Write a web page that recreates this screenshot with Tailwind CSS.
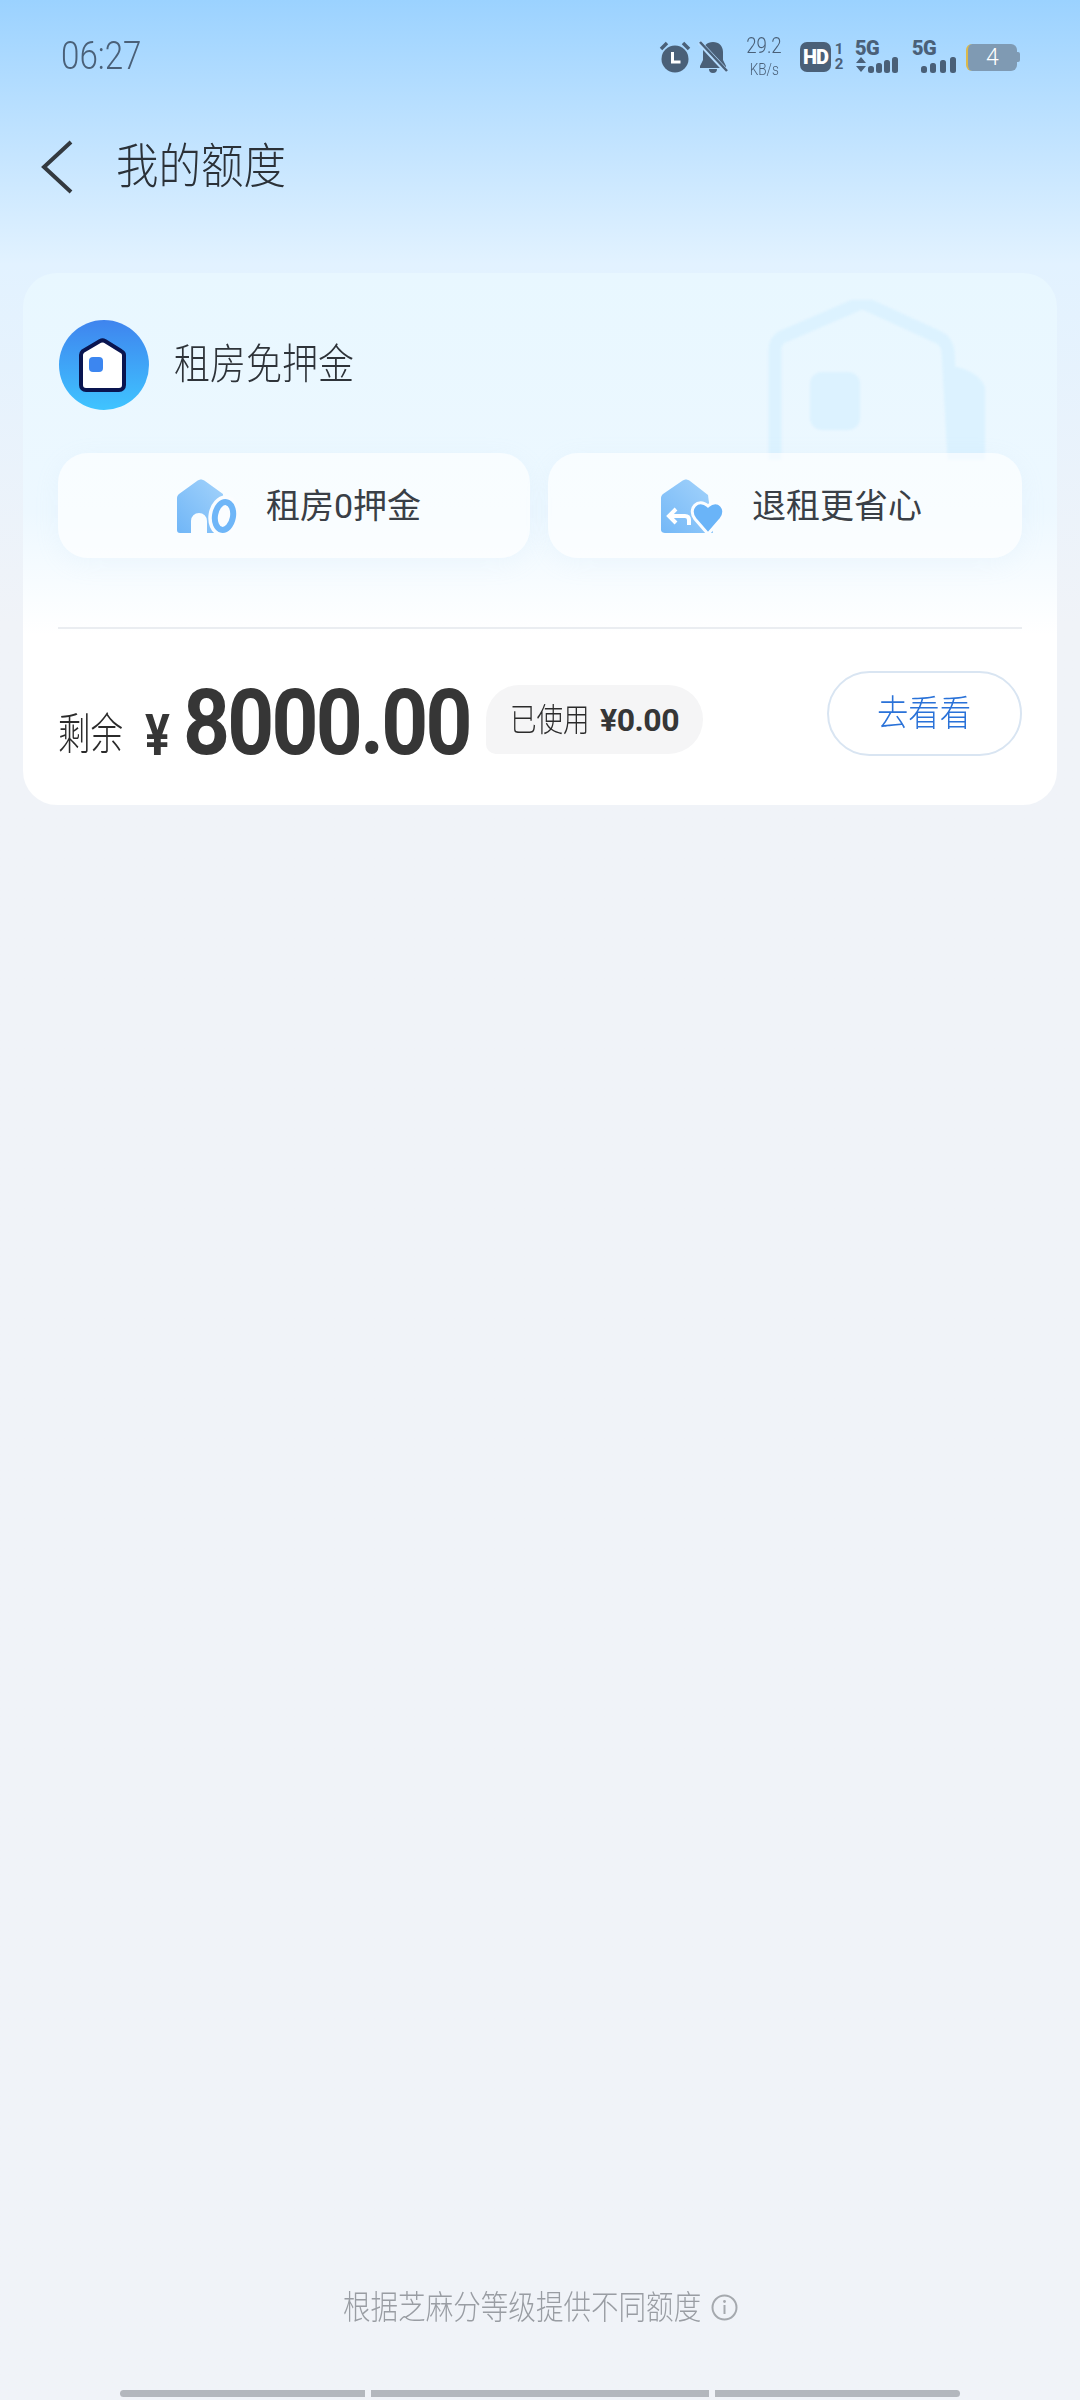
<!DOCTYPE html>
<html lang="zh">
  <head>
    <meta charset="UTF-8" />
    <meta name="viewport" content="width=device-width, initial-scale=1.0" />
    <title>我的额度</title>
    <script src="https://cdn.jsdelivr.net/npm/@tailwindcss/browser@4"></script>
  </head>
  <body class="bg-[#f0f3f8] font-['Roboto','Noto_Sans_CJK_SC',sans-serif]">
    <div class="h-[2400px] w-[1080px] flex flex-col overflow-hidden bg-gradient-to-b from-[#9bd2ff] via-[#e2f2ff] via-[11%] to-[#f0f3f8] to-[26%]">
      <!-- status bar -->
      <div class="h-[114px] pl-[61px] pr-[60px] flex items-center justify-between text-[#4a6078]">
        <span class="w-[80px] text-[39px] font-light leading-none origin-left scale-x-[.85] whitespace-nowrap -mt-[1px]">06:27</span>
        <div class="flex items-center">
          <svg class="w-[32px] h-[32px]" viewBox="0 0 32 32">
            <circle cx="16" cy="18" r="13.5" fill="#4a6078" />
            <path d="M2 8 8 2M30 8l-6-6" stroke="#4a6078" stroke-width="3.5" />
            <path d="M13.5 11v10h8" stroke="#fff" stroke-width="3" fill="none" />
          </svg>
          <svg class="w-[30px] h-[32px] ml-[7px]" viewBox="0 0 30 32">
            <path d="M15 1c6 0 10 4 10 10v8l3 6v2H2v-2l3-6v-8C5 5 9 1 15 1zM11 28h8a4 4 0 0 1-8 0z" fill="#4a6078" />
            <path d="M1 1 29 31" stroke="#b4dcff" stroke-width="5" />
            <path d="M2 1 29 30" stroke="#4a6078" stroke-width="2.5" />
          </svg>
          <div class="w-[40px] ml-[16px] flex flex-col items-center">
            <span class="text-[22px] font-light leading-[22px] origin-center scale-x-[.85] whitespace-nowrap">29.2</span>
            <span class="text-[17px] font-light leading-[20px] mt-[2px] origin-center scale-x-[.8] whitespace-nowrap">KB/s</span>
          </div>
          <div class="w-[31px] h-[30px] ml-[16px] rounded-[7px] bg-[#4a6078] text-white text-[20px] font-black leading-[30px] text-center tracking-[-1px]">HD</div>
          <div class="w-[12px] ml-[2px] flex flex-col items-center text-[15px] font-bold leading-[15px]">
            <span>1</span>
            <span>2</span>
          </div>
          <div class="w-[43px] ml-[10px] flex flex-col">
            <span class="text-[20px] font-black leading-[14px] tracking-[-.5px]">5G</span>
            <svg class="w-[43px] h-[17px] mt-[1px]" viewBox="0 0 43 17" fill="#4a6078">
              <path d="M6 1 11 7H1zM1 10h10l-5 6z" />
              <rect x="13" y="10" width="6" height="7" rx="2.5" />
              <rect x="21" y="7" width="6" height="10" rx="2.5" />
              <rect x="29" y="4" width="6" height="13" rx="2.5" />
              <rect x="37" y="1" width="6" height="16" rx="2.5" />
            </svg>
          </div>
          <div class="w-[44px] ml-[14px] flex flex-col">
            <span class="text-[20px] font-black leading-[14px] tracking-[-.5px]">5G</span>
            <svg class="w-[44px] h-[17px] mt-[1px]" viewBox="0 0 44 17" fill="#4a6078">
              <rect x="9" y="10" width="6" height="7" rx="2.5" />
              <rect x="18" y="7" width="6" height="10" rx="2.5" />
              <rect x="28" y="4" width="6" height="13" rx="2.5" />
              <rect x="38" y="1" width="6" height="16" rx="2.5" />
            </svg>
          </div>
          <div class="ml-[10px] flex items-center">
            <div class="w-[51px] h-[27px] rounded-[6px] bg-[#7f9ab3] border-l-2 border-l-[#dcb94a] text-white text-[23px] font-light leading-[27px] text-center">4</div>
            <div class="w-[3px] h-[10px] rounded-r-[2px] bg-[#7f9ab3]"></div>
          </div>
        </div>
      </div>

      <!-- title -->
      <div class="mt-[14px] h-[78px] pl-[41px] flex items-center">
        <svg class="w-[32px] h-[54px]" viewBox="0 0 32 54" fill="none">
          <path d="M30 2 3 27l27 25" stroke="#33393f" stroke-width="4" />
        </svg>
        <h1 class="ml-[43px] w-[170px] text-[48px] font-light leading-none text-[#2b3138] origin-left scale-x-[.885] whitespace-nowrap">我的额度</h1>
      </div>

      <!-- card -->
      <div class="relative mt-[67px] mx-[23px] h-[532px] rounded-[34px] overflow-hidden bg-gradient-to-b from-[#e8f7ff] via-[#edf8ff] via-[45%] to-white to-[68%] px-[35px]">
        <svg class="absolute left-[745px] top-[27px] w-[222px] h-[160px] blur-[1px]" viewBox="0 0 222 160" fill="none">
          <path d="M184 66c14 2 30 10 33 22v72h-33z" fill="#dcf2ff" />
          <path d="M7 160V50c0-6 2-10 7-13L88 5c4-2 8-2 12 0l70 32c6 3 9 7 10 14l6 109" stroke="#dcf2ff" stroke-width="13" />
          <rect x="42" y="72" width="50" height="58" rx="12" fill="#dcf2ff" />
        </svg>

        <div class="relative pt-[47px] flex items-center">
          <div class="ml-[1px] w-[90px] h-[90px] rounded-full bg-gradient-to-b from-[#3f84ee] to-[#3fc4ff] flex items-center justify-center">
            <svg class="w-[48px] h-[56px] -ml-[4px]" viewBox="0 0 48 56">
              <path d="M3 18c0-2 1-3 2-4L22 4c2-1 3-1 5 0l16 10c2 1 3 2 3 4v30c0 3-2 5-5 5H8c-3 0-5-2-5-5z" fill="#fff" stroke="#0a1550" stroke-width="4" />
              <rect x="11" y="20" width="14" height="15" rx="4" fill="#3c86f0" />
            </svg>
          </div>
          <span class="ml-[25px] w-[180px] text-[42px] font-light leading-none text-[#2e3339] origin-left scale-x-[.857] whitespace-nowrap">租房免押金</span>
        </div>

        <div class="relative mt-[43px] flex justify-between">
          <div class="w-[472px] h-[105px] rounded-[30px] bg-white/65 shadow-[0_6px_24px_rgba(190,215,240,0.12)] flex items-center pl-[118px]">
            <svg class="w-[64px] h-[56px]" viewBox="0 0 64 56">
              <defs>
                <linearGradient id="houseA" x1="1" y1="0" x2="0" y2="1">
                  <stop offset="0" stop-color="#a4d3fb" />
                  <stop offset="1" stop-color="#70b6f7" />
                </linearGradient>
              </defs>
              <path d="M1 20c0-2 1-3 2-4L21 3c3-2 5-2 8 0l18 13 2 39H31V43a8 8 0 0 0-16 0v12H4c-2 0-3-1-3-3z" fill="url(#houseA)" />
              <ellipse cx="48" cy="38" rx="9" ry="14" transform="rotate(10 48 38)" fill="none" stroke="#fbfdff" stroke-width="13" />
              <ellipse cx="48" cy="38" rx="9" ry="14" transform="rotate(10 48 38)" fill="#fbfdff" stroke="#6fb6f8" stroke-width="6" />
            </svg>
            <span class="ml-[26px] text-[34px] leading-none text-[#3a3f46] whitespace-nowrap">租房0押金</span>
          </div>
          <div class="w-[474px] h-[105px] rounded-[30px] bg-white/65 shadow-[0_6px_24px_rgba(190,215,240,0.12)] flex items-center pl-[113px]">
            <svg class="w-[64px] h-[56px]" viewBox="0 0 64 56">
              <defs>
                <linearGradient id="houseB" x1="1" y1="0" x2="0" y2="1">
                  <stop offset="0" stop-color="#a4d3fb" />
                  <stop offset="1" stop-color="#74b8f7" />
                </linearGradient>
              </defs>
              <path d="M0 20c0-2 1-3 2-4L21 3c3-2 5-2 8 0l18 14 5 38H4c-2 0-4-1-4-3z" fill="url(#houseB)" />
              <path d="M8 38h16c3 0 4 2 4 4v5M15 31l-7 7 7 7" stroke="#fff" stroke-width="4" fill="none" />
              <path d="M47 56 34 41c-8-10 3-22 13-13 10-9 21 3 13 13z" fill="#6ab4f8" stroke="#fbfdff" stroke-width="3" />
            </svg>
            <span class="ml-[27px] text-[34px] leading-none text-[#3a3f46] whitespace-nowrap">退租更省心</span>
          </div>
        </div>

        <div class="relative mt-[69px] h-[2px] bg-[#eaedf1]"></div>

        <div class="relative mt-[42px] flex items-start">
          <div class="flex items-end h-[94px] text-[#363636]">
            <span class="w-[66px] mb-[8px] text-[44px] font-light leading-[44px] text-[#2b2b2b] origin-left scale-x-[.74] whitespace-nowrap">剩余</span>
            <span class="ml-[21px] w-[27px] mb-[1px] text-[58px] font-bold leading-[58px] origin-left scale-x-[.8]">¥</span>
            <span class="ml-[11px] w-[289px] text-[91px] font-bold leading-[84px] tracking-[-3px] origin-left scale-x-[.9] whitespace-nowrap">8000.00</span>
          </div>
          <div class="ml-[14px] mt-[14px] w-[217px] h-[69px] rounded-tl-[34px] rounded-bl-[10px] rounded-r-[35px] bg-[#f5f5f6] flex items-center pl-[24px] text-[#363636]">
            <span class="w-[80px] text-[32px] font-light text-[#2b2b2b] origin-left scale-x-[.83] whitespace-nowrap">已使用</span>
            <span class="ml-[10px] text-[32px] font-bold tracking-[-.5px] whitespace-nowrap">¥0.00</span>
          </div>
          <div class="ml-auto w-[195px] h-[85px] rounded-full border-2 border-[#d9e5f2] flex items-center justify-center text-[#2a72d8]">
            <span class="text-[36px] font-light leading-none scale-x-[.87] whitespace-nowrap">去看看</span>
          </div>
        </div>
      </div>

      <!-- footer -->
      <div class="mt-auto flex items-center justify-center text-[#999da3]">
        <span class="w-[358px] text-[33px] font-light leading-none origin-left scale-x-[.835] whitespace-nowrap">根据芝麻分等级提供不同额度</span>
        <svg class="ml-[10px] w-[27px] h-[27px]" viewBox="0 0 27 27" fill="none">
          <circle cx="13.5" cy="13.5" r="12" stroke="#a5a9ae" stroke-width="2" />
          <path d="M13.5 11v9" stroke="#a5a9ae" stroke-width="2" />
          <circle cx="13.5" cy="7.5" r="1.4" fill="#a5a9ae" />
        </svg>
      </div>
      <div class="mt-[66px] mb-[3px] flex justify-center gap-[6px]">
        <div class="w-[245px] h-[7px] rounded-l-[4px] bg-[#b3b7bd]"></div>
        <div class="w-[338px] h-[7px] bg-[#b3b7bd]"></div>
        <div class="w-[245px] h-[7px] rounded-r-[4px] bg-[#b3b7bd]"></div>
      </div>
    </div>
  </body>
</html>
